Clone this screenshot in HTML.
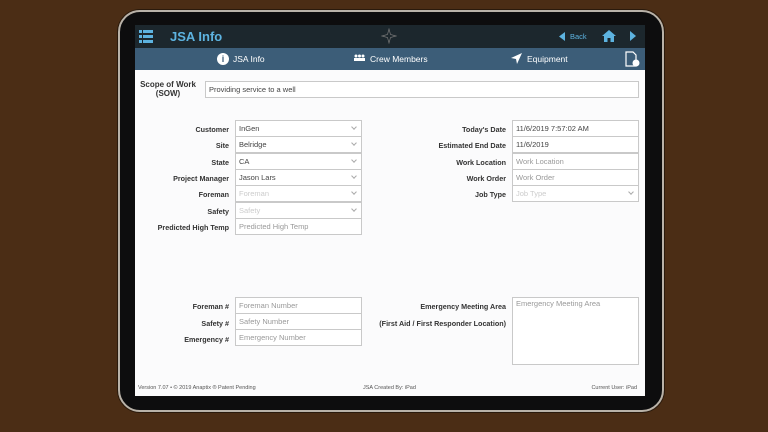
<!DOCTYPE html>
<html><head><style>
*{margin:0;padding:0;box-sizing:border-box}
body{width:768px;height:432px;overflow:hidden;background:#4b2d15;font-family:"Liberation Sans",sans-serif;position:relative}
.tab{position:absolute;left:118px;top:10px;width:546px;height:402px;border-radius:22px;background:#0d0d0e;border:2px solid #b9b2a8;box-shadow:0 0 0 1px #2a1a0c}
.scr{position:absolute;left:135px;top:25px;width:510px;height:371px;background:#fbfbfc;overflow:hidden}
.hd{position:absolute;left:0;top:0;width:510px;height:23px;background:#1c272d}
.tb{position:absolute;left:0;top:23px;width:510px;height:22px;background:#3c5d78;color:#fff;font-size:8.5px}
.a{position:absolute}
.l{position:absolute;font-size:7.2px;font-weight:bold;color:#333;text-align:right}
.i{position:absolute;height:16.5px;border:1px solid #c9c9c9;background:#fff;font-size:7.5px;color:#444;padding:3px 3px;white-space:nowrap}
.p{color:#999}.pp{color:#ccc}
.c:after{content:"";position:absolute;right:5px;top:4px;width:3px;height:3px;border-right:1px solid #aaa;border-bottom:1px solid #aaa;transform:rotate(45deg)}
.f{position:absolute;top:360px;font-size:5.5px;color:#555}
</style></head><body>
<div class="tab"></div>
<div class="scr">
<div class="hd">
 <div class="a" style="left:4px;top:5px;width:14px;height:13px">
  <div class="a" style="left:0;top:0;width:3px;height:2.5px;background:#5db3e0"></div><div class="a" style="left:4px;top:0;width:10px;height:2.5px;background:#5db3e0"></div>
  <div class="a" style="left:0;top:5px;width:3px;height:2.5px;background:#5db3e0"></div><div class="a" style="left:4px;top:5px;width:10px;height:2.5px;background:#5db3e0"></div>
  <div class="a" style="left:0;top:10px;width:3px;height:2.5px;background:#5db3e0"></div><div class="a" style="left:4px;top:10px;width:10px;height:2.5px;background:#5db3e0"></div>
 </div>
 <div class="a" style="left:35px;top:4px;font-size:13px;font-weight:bold;color:#5db3e0">JSA Info</div>
 <svg class="a" style="left:246px;top:3px" width="16" height="16" viewBox="0 0 16 16"><path d="M8 1L9.5 6.5 15 8 9.5 9.5 8 15 6.5 9.5 1 8 6.5 6.5Z" fill="none" stroke="#777" stroke-width=".7"/></svg>
 <svg class="a" style="left:424px;top:7px" width="6" height="9"><path d="M6 0L0 4.5 6 9Z" fill="#5db3e0"/></svg>
 <div class="a" style="left:435px;top:7px;font-size:7.5px;color:#5db3e0">Back</div>
 <svg class="a" style="left:467px;top:5px" width="14" height="12" viewBox="0 0 14 12"><path d="M7 0L0 6H2V12H5.5V8H8.5V12H12V6H14Z" fill="#5db3e0"/></svg>
 <svg class="a" style="left:495px;top:6px" width="6" height="10"><path d="M0 0L6 5 0 10Z" fill="#5db3e0"/></svg>
</div>
<div class="tb">
 <div class="a" style="left:82px;top:5px;width:12px;height:12px;border-radius:50%;background:#fff;color:#3c5d78;font-size:9px;font-weight:bold;text-align:center;line-height:12px">i</div>
 <div class="a" style="left:98px;top:6px">JSA Info</div>
 <svg class="a" style="left:218px;top:6px" width="13" height="8"><circle cx="3" cy="2" r="1.5" fill="#fff"/><circle cx="6.5" cy="2" r="1.5" fill="#fff"/><circle cx="10" cy="2" r="1.5" fill="#fff"/><rect x="1" y="4" width="11" height="3" fill="#fff"/></svg>
 <div class="a" style="left:235px;top:6px">Crew Members</div>
 <svg class="a" style="left:376px;top:5px" width="11" height="11"><path d="M11 0L0 5 5 6 6 11Z" fill="#fff"/></svg>
 <div class="a" style="left:392px;top:6px">Equipment</div>
 <svg class="a" style="left:490px;top:3px" width="15" height="17"><path d="M1 1H8L11 4V15H1Z" fill="none" stroke="#fff" stroke-width="1.2"/><circle cx="11" cy="12" r="3.5" fill="#fff"/></svg>
</div>
<div class="l" style="left:2px;top:55px;width:62px;text-align:center;font-size:8px">Scope of Work<br>(SOW)</div>
<div class="i" style="left:70px;top:56px;width:434px">Providing service to a well</div>

<div class="l" style="left:0;top:100px;width:94px">Customer</div><div class="i c" style="left:100px;top:95px;width:127px">InGen</div>
<div class="l" style="left:0;top:116px;width:94px">Site</div><div class="i c" style="left:100px;top:111px;width:127px">Belridge</div>
<div class="l" style="left:0;top:133px;width:94px">State</div><div class="i c" style="left:100px;top:128px;width:127px">CA</div>
<div class="l" style="left:0;top:149px;width:94px">Project Manager</div><div class="i c" style="left:100px;top:144px;width:127px">Jason Lars</div>
<div class="l" style="left:0;top:165px;width:94px">Foreman</div><div class="i c pp" style="left:100px;top:160px;width:127px">Foreman</div>
<div class="l" style="left:0;top:182px;width:94px">Safety</div><div class="i c pp" style="left:100px;top:177px;width:127px">Safety</div>
<div class="l" style="left:0;top:198px;width:94px">Predicted High Temp</div><div class="i p" style="left:100px;top:193px;width:127px">Predicted High Temp</div>

<div class="l" style="left:250px;top:100px;width:121px">Today's Date</div><div class="i" style="left:377px;top:95px;width:127px">11/6/2019 7:57:02 AM</div>
<div class="l" style="left:250px;top:116px;width:121px">Estimated End Date</div><div class="i" style="left:377px;top:111px;width:127px">11/6/2019</div>
<div class="l" style="left:250px;top:133px;width:121px">Work Location</div><div class="i p" style="left:377px;top:128px;width:127px">Work Location</div>
<div class="l" style="left:250px;top:149px;width:121px">Work Order</div><div class="i p" style="left:377px;top:144px;width:127px">Work Order</div>
<div class="l" style="left:250px;top:165px;width:121px">Job Type</div><div class="i c pp" style="left:377px;top:160px;width:127px">Job Type</div>

<div class="l" style="left:0;top:277px;width:94px">Foreman #</div><div class="i p" style="left:100px;top:272px;width:127px">Foreman Number</div>
<div class="l" style="left:0;top:294px;width:94px">Safety #</div><div class="i p" style="left:100px;top:288px;width:127px">Safety Number</div>
<div class="l" style="left:0;top:310px;width:94px">Emergency #</div><div class="i p" style="left:100px;top:304px;width:127px">Emergency Number</div>

<div class="l" style="left:200px;top:277px;width:171px">Emergency Meeting Area</div>
<div class="l" style="left:200px;top:294px;width:171px">(First Aid / First Responder Location)</div>
<div class="i p" style="left:377px;top:272px;width:127px;height:68px;padding-top:1px">Emergency Meeting Area</div>

<div class="f" style="left:3px">Version 7.07 • © 2019 Anaptix ® Patent Pending</div>
<div class="f" style="left:228px">JSA Created By: iPad</div>
<div class="f" style="right:8px">Current User: iPad</div>
</div>
</body></html>
